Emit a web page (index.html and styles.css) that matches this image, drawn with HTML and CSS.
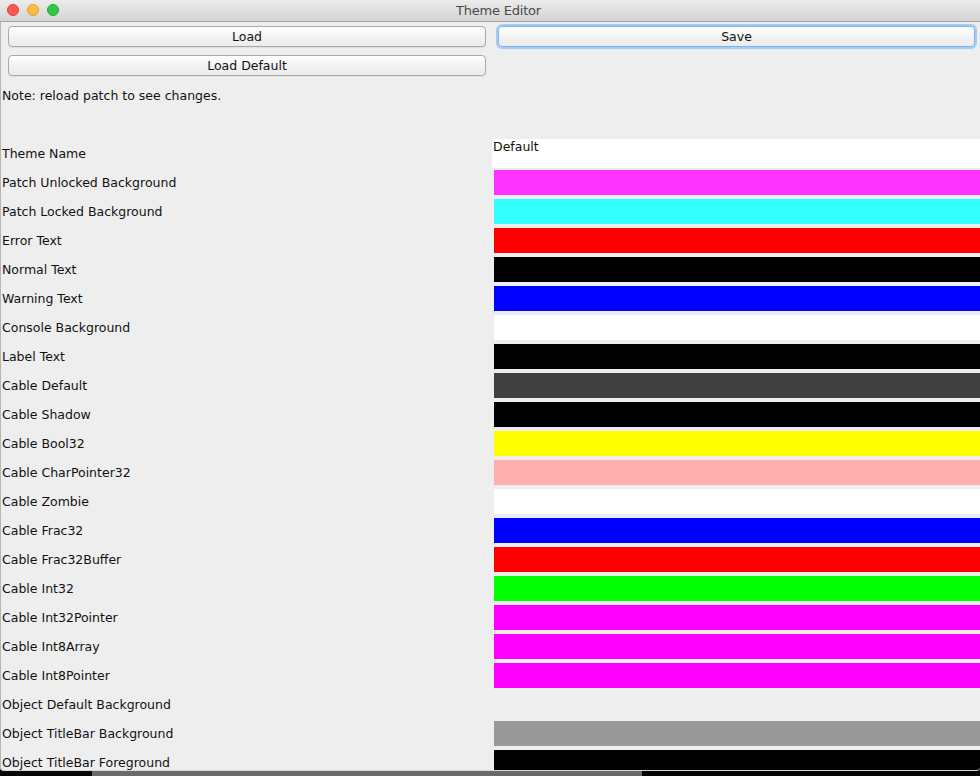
FILE: index.html
```html
<!DOCTYPE html>
<html>
<head>
<meta charset="utf-8">
<title>Theme Editor</title>
<link rel="stylesheet" href="styles.css">
</head>
<body>
<div class="window">
  <div class="titlebar">
    <div class="lights">
      <span class="light red"></span>
      <span class="light yellow"></span>
      <span class="light green"></span>
    </div>
    <div class="title">Theme Editor</div>
  </div>
  <div class="content">
    <div class="buttons">
      <button class="btn">Load</button>
      <button class="btn focus">Save</button>
      <button class="btn">Load Default</button>
    </div>
    <div class="note">Note: reload patch to see changes.</div>
    <div class="rows">
      <div class="row"><div class="label">Theme Name</div><div class="field">Default</div></div>
      <div class="row"><div class="label">Patch Unlocked Background</div><div class="swatch" style="background:#ff33ff"></div></div>
      <div class="row"><div class="label">Patch Locked Background</div><div class="swatch" style="background:#33ffff"></div></div>
      <div class="row"><div class="label">Error Text</div><div class="swatch" style="background:#ff0000"></div></div>
      <div class="row"><div class="label">Normal Text</div><div class="swatch" style="background:#000000"></div></div>
      <div class="row"><div class="label">Warning Text</div><div class="swatch" style="background:#0000ff"></div></div>
      <div class="row"><div class="label">Console Background</div><div class="swatch" style="background:#ffffff"></div></div>
      <div class="row"><div class="label">Label Text</div><div class="swatch" style="background:#000000"></div></div>
      <div class="row"><div class="label">Cable Default</div><div class="swatch" style="background:#404040"></div></div>
      <div class="row"><div class="label">Cable Shadow</div><div class="swatch" style="background:#000000"></div></div>
      <div class="row"><div class="label">Cable Bool32</div><div class="swatch" style="background:#ffff00"></div></div>
      <div class="row"><div class="label">Cable CharPointer32</div><div class="swatch" style="background:#ffafaf"></div></div>
      <div class="row"><div class="label">Cable Zombie</div><div class="swatch" style="background:#ffffff"></div></div>
      <div class="row"><div class="label">Cable Frac32</div><div class="swatch" style="background:#0000ff"></div></div>
      <div class="row"><div class="label">Cable Frac32Buffer</div><div class="swatch" style="background:#ff0000"></div></div>
      <div class="row"><div class="label">Cable Int32</div><div class="swatch" style="background:#00ff00"></div></div>
      <div class="row"><div class="label">Cable Int32Pointer</div><div class="swatch" style="background:#ff00ff"></div></div>
      <div class="row"><div class="label">Cable Int8Array</div><div class="swatch" style="background:#ff00ff"></div></div>
      <div class="row"><div class="label">Cable Int8Pointer</div><div class="swatch" style="background:#ff00ff"></div></div>
      <div class="row"><div class="label">Object Default Background</div><div class="swatch" style="background:#eeeeee"></div></div>
      <div class="row"><div class="label">Object TitleBar Background</div><div class="swatch" style="background:#999999"></div></div>
      <div class="row"><div class="label">Object TitleBar Foreground</div><div class="swatch" style="background:#000000"></div></div>
    </div>
  </div>
</div>
<div class="desktop">
  <div class="d-black"></div>
  <div class="d-gray"></div>
  <div class="d-black2"></div>
</div>
</body>
</html>
```
FILE: styles.css
```css
html, body {
  margin: 0;
  padding: 0;
  background: #000;
}
body {
  width: 980px;
  height: 776px;
  overflow: hidden;
  font-family: "DejaVu Sans", "Noto Sans", sans-serif;
  font-size: 12.5px;
  color: #111111;
}
.window {
  height: 771px;
  background: #eeeeee;
  overflow: hidden;
  display: flex;
  flex-direction: column;
  border-bottom: 1px solid #d8d8d8;
  box-sizing: border-box;
  border-radius: 0 0 4px 4px;
  box-shadow: inset 1px 0 0 #b5b5b5;
}
.titlebar {
  height: 21px;
  flex: none;
  background: linear-gradient(#ececec, #d4d4d4);
  border-bottom: 1px solid #a6a6a6;
  display: flex;
  align-items: center;
  position: relative;
}
.lights {
  display: flex;
  gap: 8px;
  padding-left: 7px;
  position: absolute;
  left: 0;
  top: 4px;
}
.light {
  width: 12px;
  height: 12px;
  border-radius: 50%;
  box-sizing: border-box;
}
.red { background: #fc5753; border: 1px solid #df3e3a; }
.yellow { background: #fdbc40; border: 1px solid #de9f34; }
.green { background: #33c748; border: 1px solid #27aa35; }
.title {
  flex: 1;
  text-align: center;
  padding-left: 17px;
  font-size: 13px;
  color: #4a4a4a;
  font-family: "DejaVu Sans", sans-serif;
  letter-spacing: -0.2px;
}
.content {
  flex: 1;
  overflow: hidden;
}
.buttons {
  display: grid;
  grid-template-columns: 478px 477px;
  column-gap: 12px;
  row-gap: 8px;
  padding: 4px 0 0 8px;
}
.btn {
  height: 21px;
  margin: 0;
  padding: 0;
  border: 1px solid #a9a9a9;
  border-radius: 4px;
  background: linear-gradient(#ffffff, #f1f1f1 60%, #ececec);
  font-family: "DejaVu Sans", sans-serif;
  font-size: 12.5px;
  color: #111111;
  text-align: center;
  box-shadow: 0 1px 0 rgba(0,0,0,0.05);
}
.btn.focus {
  border: 1px solid #7fb3ee;
  box-shadow: 0 0 0 2px #a6cbf5;
}
.note {
  padding: 12px 0 0 2px;
  height: 16px;
  line-height: 16px;
}
.rows {
  padding-top: 35px;
}
.row {
  display: flex;
  height: 29px;
  align-items: center;
}
.label {
  width: 490px;
  padding-left: 2px;
  flex: none;
}
.field {
  flex: 1;
  align-self: stretch;
  background: #ffffff;
  padding: 1px 0 0 1px;
  line-height: 14px;
}
.swatch {
  flex: 1;
  height: 25px;
  margin-left: 2px;
}
.desktop {
  display: flex;
  height: 5px;
}
.d-black { width: 92px; background: #050505; }
.d-gray { width: 550px; background: #6a6a6a; }
.d-black2 { flex: 1; background: #050505; }
```
